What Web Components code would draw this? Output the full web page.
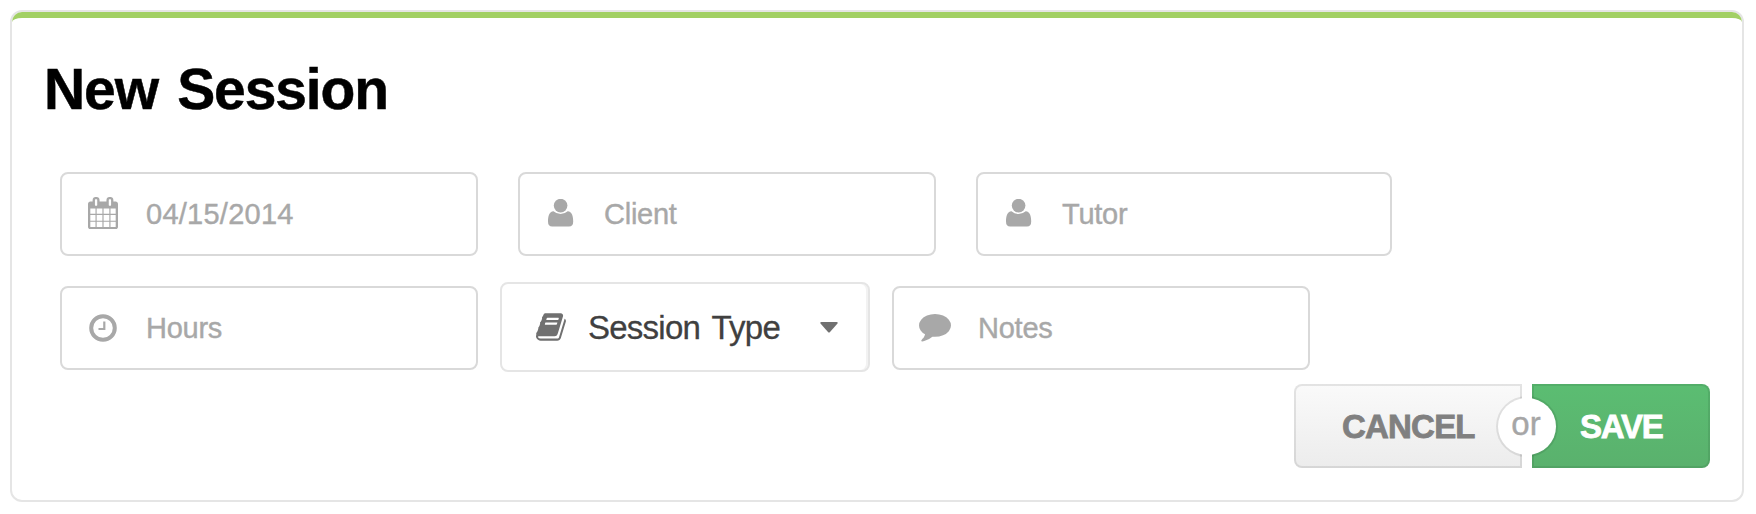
<!DOCTYPE html>
<html lang="en"><head><meta charset="utf-8"><title>New Session</title>
<style>body{margin:0;background:#fff;font-family:"Liberation Sans",Arial,sans-serif}</style></head>
<body>
<session-card heading="New Session">
  <field-row>
    <icon-field icon="calendar" style="--ls:.25px">04/15/2014</icon-field>
    <icon-field icon="user">Client</icon-field>
    <icon-field icon="user" style="--w:416px">Tutor</icon-field>
  </field-row>
  <field-row style="--gap:22px;--mt:23px;--shift:2px;--lift:0px">
    <icon-field icon="clock">Hours</icon-field>
    <type-select>Session Type</type-select>
    <icon-field icon="comment">Notes</icon-field>
  </field-row>
  <button-pair slot="actions"></button-pair>
</session-card>
<script>
const ICONS = {
  calendar: '<svg width="30" height="32.3" viewBox="64 0 1664 1792"><path fill="currentColor" d="M192 1664h288v-288h-288v288zm352 0h320v-288h-320v288zm-352-352h288v-320h-288v320zm352 0h320v-320h-320v320zm-352-384h288v-288h-288v288zm736 736h320v-288h-320v288zm-384-736h320v-288h-320v288zm768 736h288v-288h-288v288zm-384-352h320v-320h-320v320zm-352-864v-288q0-13-9.500-22.500t-22.500-9.500h-64q-13 0-22.500 9.500t-9.500 22.500v288q0 13 9.500 22.500t22.500 9.500h64q13 0 22.500-9.500t9.500-22.500zm736 864h288v-320h-288v320zm-384-384h320v-288h-320v288zm384 0h288v-288h-288v288zm32-480v-288q0-13-9.500-22.500t-22.500-9.500h-64q-13 0-22.500 9.500t-9.500 22.500v288q0 13 9.500 22.500t22.500 9.500h64q13 0 22.500-9.500t9.500-22.500zm384-64v1280q0 52-38 90t-90 38h-1408q-52 0-90-38t-38-90v-1280q0-52 38-90t90-38h128v-96q0-66 47-113t113-47h64q66 0 113 47t47 113v96h384v-96q0-66 47-113t113-47h64q66 0 113 47t47 113v96h128q52 0 90 38t38 90z"/></svg>',
  user: '<svg width="26" height="28" viewBox="0 0 26 28"><circle cx="12.600" cy="6.600" r="6.800" fill="currentColor"/><path fill="currentColor" d="M5.500 12.300Q8.500 15 12.600 15T19.700 12.300C24 12.300 25.200 17.500 25.200 22.500Q25.200 27.500 21 27.500H4.200Q0 27.500 0 22.500C0 17.500 1.200 12.300 5.500 12.300Z"/></svg>',
  clock: '<svg width="28" height="28" viewBox="0 0 28 28" fill="none" stroke="currentColor"><circle cx="14" cy="14" r="11.800" stroke-width="4"/><path d="M15.300 7.500V15H9.500" stroke-width="2.200"/></svg>',
  comment: '<svg width="32" height="27.4" viewBox="0 256 1792 1536"><path fill="currentColor" d="M1792 896q0 174-120 321.500t-326 233-450 85.500q-70 0-145-8-198 175-460 242-49 14-114 22h-5q-15 0-27-10.500t-16-27.500v-1q-3-4-.5-12t2-10 4.500-9.500l6-9 7-8.500 8-9q7-8 31-34.500t34.500-38 31-39.500 32.500-51 27-59 26-76q-157-89-247.500-220t-90.500-281q0-174 120-321.500t326-233 450-85.500 450 85.500 326 233 120 321.500z"/></svg>',
  book: '<svg width="30" height="28" viewBox="64 128 1668 1536"><path fill="currentColor" d="M1703 478q40 57 18 129l-275 906q-19 64-76.500 107.500t-122.500 43.500h-923q-77 0-148.500-53.500t-99.500-131.500q-24-67-2-127 0-4 3-27t4-37q1-8-3-21.500t-3-19.500q2-11 8-21t16.500-23.500 16.500-23.500q23-38 45-91.500t30-91.500q3-10 .5-30t-.5-28q3-11 17-28t17-23q21-36 42-92t25-90q1-9-2.500-32t.5-28q4-13 22-30.500t22-22.500q19-26 42.500-84.500t27.500-96.500q1-8-3-25.500t-2-26.500q2-8 9-18t18-23 17-21q8-12 16.500-30.500t15-35 16-36 19.500-32 26.500-23.500 36-11.500 47.500 5.500l-1 3q38-9 51-9h761q74 0 114 56t18 130l-274 906q-36 119-71.500 153.500t-128.500 34.500h-869q-27 0-38 15-11 16-1 43 24 70 144 70h923q29 0 56-15.500t35-41.500l300-987q7-22 5-57 38 15 59 43zm-1064 2q-4 13 2 22.500t20 9.500h608q13 0 25.500-9.500t16.500-22.500l21-64q4-13-2-22.500t-20-9.500h-608q-13 0-25.500 9.500t-16.500 22.500zm-83 256q-4 13 2 22.500t20 9.500h608q13 0 25.500-9.500t16.500-22.500l21-64q4-13-2-22.500t-20-9.500h-608q-13 0-25.500 9.500t-16.500 22.500z"/></svg>'
};
function define(name, render) {
  customElements.define(name, class extends HTMLElement {
    connectedCallback() {
      if (!this.shadowRoot) this.attachShadow({mode: 'open'}).innerHTML = render(this);
    }
  });
}
define('session-card', el => `<style>
  :host{display:block;box-sizing:border-box;width:1734px;height:492px;margin:10px;border:2px solid #e5e5e5;border-radius:12px}
  .in{box-sizing:border-box;height:488px;border-top:6px solid #a2d064;border-radius:10px;display:flow-root;padding:0 32px 0 48px}
  h1{margin:39px 0 51px -16px;font-size:57px;line-height:64px;letter-spacing:-1.1px;word-spacing:4.500px;color:#000;font-weight:700;-webkit-text-stroke:.5px}
  .act{display:flex;justify-content:flex-end;margin-top:12px}
</style><div class="in"><h1>${el.getAttribute('heading')}</h1><slot></slot><div class="act"><slot name="actions"></slot></div></div>`);
define('field-row', () => `<style>
  :host{display:flex;align-items:center;gap:var(--gap,40px);height:90px;margin-top:var(--mt,-3px)}
</style><slot></slot>`);
define('icon-field', el => `<style>
  :host{display:flex;box-sizing:border-box;width:var(--w,418px);height:84px;margin-top:var(--shift,0);border:2px solid #d9d9d9;border-radius:8px;align-items:center;color:#a8a8a8;font-size:29px}
  .i{width:82px;display:flex;justify-content:center;margin-top:var(--lift,-2px)}
  svg{display:block}
  .t{margin-left:2px;letter-spacing:var(--ls,-.25px);line-height:32px;-webkit-text-stroke:.4px}
</style><div class="i">${ICONS[el.getAttribute('icon')]}</div><span class="t"><slot></slot></span>`);
define('type-select', () => `<style>
  :host{display:flex;box-sizing:border-box;width:370px;height:90px;border:2px solid #e5e5e5;border-radius:8px;align-items:center;color:#404040;font-size:33px;padding-left:34px;box-shadow:inset -2px 0 #f2f2f2}
  svg{display:block;color:#707070}
  .t{margin:2px 0 0 22px;line-height:36px;letter-spacing:-.75px;word-spacing:3.500px;-webkit-text-stroke:.3px}
  .c{margin-left:auto;margin-right:30px}
</style>${ICONS.book}<span class="t"><slot></slot></span><svg class="c" width="18" height="11" viewBox="0 0 18 11"><path d="M1.500 0h15q2 0 .8 1.700L10 10q-1 1-2 0L.7 1.700Q-.5 0 1.500 0z" fill="currentColor"/></svg>`);
define('button-pair', () => `<style>
  :host{display:flex;position:relative;gap:10px;font-size:33px;font-weight:700}
  .b{box-sizing:border-box;height:84px;line-height:81px;border:2px solid;white-space:nowrap;-webkit-text-stroke:.8px}
  .cancel{width:228px;padding-left:46px;color:#808080;background:linear-gradient(#fafafa,#ececec) border-box;border-color:rgba(0,0,0,.09);border-radius:8px 0 0 8px;letter-spacing:-.8px}
  .save{width:178px;padding-left:46px;color:#fff;background:linear-gradient(#5bbd72,#5ab16d) border-box;border-color:rgba(0,0,0,.08);border-radius:0 8px 8px 0;letter-spacing:-1.2px}
  .ring,.or{position:absolute;left:204px;top:14px;width:58px;height:57px;border-radius:50%}
  .ring{background:#fff;box-shadow:0 0 0 2px rgba(0,0,0,.09)}
  .or{left:203px;color:#a6a6a6;font-weight:400;line-height:51px;text-align:center;-webkit-text-stroke:.4px}
  .gap{position:absolute;left:228px;top:0;width:10px;height:84px;background:#fff}
</style><div class="b cancel">CANCEL</div><div class="b save">SAVE</div><div class="ring"></div><div class="gap"></div><div class="or">or</div>`);
</script>
</body></html>
